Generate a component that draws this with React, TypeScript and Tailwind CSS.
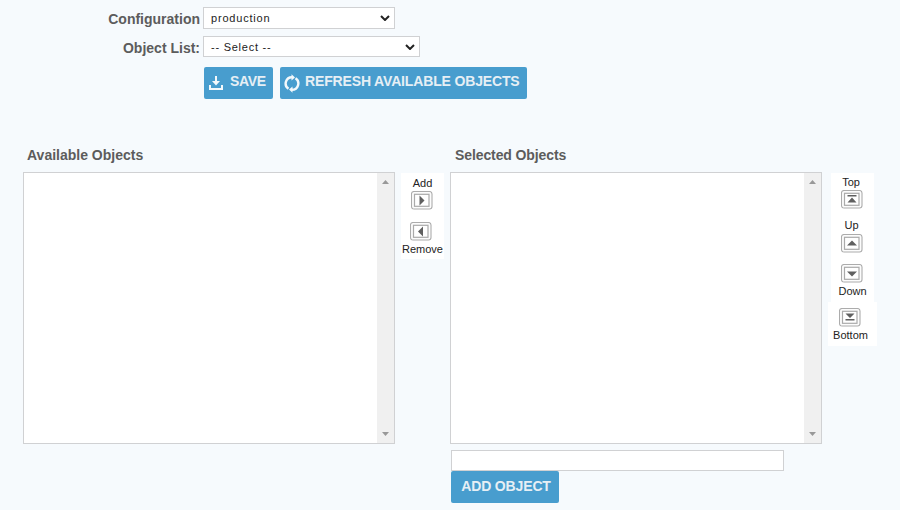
import type { ReactNode } from "react";

type Direction = "right" | "left" | "top" | "up" | "down" | "bottom";

const arrows: Record<Direction, ReactNode> = {
  right: <path d="M8.500 4.500v10l5-5z" />,
  left: <path d="M13 4.500v10l-5-5z" />,
  top: <path d="M6.500 5h9v1.500h-9zM11 7.500l4.500 5h-9z" />,
  up: <path d="M11 6.500l5 5H6z" />,
  down: <path d="M6 7.500h10l-5 5z" />,
  bottom: <path d="M6.500 5.500h9L11 10zM6.500 11h9v1.500h-9z" />,
};

function ArrowButton({ dir }: { dir: Direction }) {
  return (
    <svg className="block h-[19px] w-[22px] shrink-0" viewBox="0 0 22 19">
      <rect x="0.500" y="0.500" width="20.500" height="17.500" rx="2.500" fill="#fcfcfc" stroke="#acacac" strokeWidth="1.100" />
      <rect x="3.500" y="3.300" width="14.500" height="12" fill="#fff" stroke="#aaa" strokeWidth="1.200" />
      <g fill="#606060">{arrows[dir]}</g>
    </svg>
  );
}

function Select({ value, className }: { value: string; className: string }) {
  return (
    <div className={`flex items-center justify-between border border-[#d0d1d3] bg-white pl-[7px] pr-1 text-[11px] text-[#222] ${className}`}>
      <span className="pt-[2px]">{value}</span>
      <svg className="h-[6px] w-[10px]" viewBox="0 0 10 6" fill="none" stroke="#222" strokeWidth="2">
        <path d="M1 1l4 4 4-4" />
      </svg>
    </div>
  );
}

function ListBox() {
  return (
    <div className="flex h-[272px] w-[372px] shrink-0 justify-end border border-[#d0d1d3] bg-white">
      <div className="flex w-[17px] flex-col items-center justify-between bg-[#f0f0f0] pb-[7px] pt-[7px]">
        <svg className="h-[4px] w-[7px]" viewBox="0 0 7 4" fill="#989898"><path d="M0 4l3.500-4L7 4z" /></svg>
        <svg className="h-[4px] w-[7px]" viewBox="0 0 7 4" fill="#989898"><path d="M0 0l3.500 4L7 0z" /></svg>
      </div>
    </div>
  );
}

const button = "flex h-8 items-start rounded-[2px] bg-[#489dce] text-sm leading-4 font-bold text-[#e6eff5] whitespace-nowrap";
const label = "block text-[11px] leading-3 text-[#222] whitespace-nowrap";

export default function App() {
  return (
    <main className="h-[510px] w-[900px] overflow-hidden bg-[#f6fafd] font-['Liberation_Sans',Arial,sans-serif]">
      <div className="flex h-[67px] flex-col pt-[7px] text-sm font-bold text-[#5c5c5c]">
        <div className="flex h-[29px] items-start">
          <label className="w-[203px] pr-[3px] pt-[2px] text-right">Configuration</label>
          <Select value="production" className="h-[22px] w-[192px] font-normal tracking-[0.800px]" />
        </div>
        <div className="flex items-start">
          <label className="w-[203px] pr-[3px] pt-[2px] text-right">Object List:</label>
          <Select value="-- Select --" className="h-[21px] w-[217px] font-normal tracking-[0.750px]" />
        </div>
      </div>
      <div className="flex gap-[7px] pl-[204px]">
        <button className={`${button} w-[69px] pl-[5px] pt-[6px] tracking-[-0.300px]`}>
          <svg className="mr-[7px] mt-[3px] h-[14px] w-[14px]" viewBox="0 0 14 14" fill="none" stroke="#f3f8fb" strokeWidth="2">
            <path d="M1 9v4h12V9M7 0v6" />
            <path d="M3 5h8L7 9.500z" fill="#f3f8fb" stroke="none" />
          </svg>
          SAVE
        </button>
        <button className={`${button} w-[247px] pl-1 pt-[6px] tracking-[-0.150px]`}>
          <svg className="mr-[5px] h-[20px] w-[16px]" viewBox="0 0 16 20" fill="none" stroke="#f3f8fb" strokeWidth="2.400">
            <path d="M4.500 15.740A6.300 6.300 0 0 1 8 4.200M11.500 5.260A6.300 6.300 0 0 1 8 16.800" />
            <path d="M7.500 1.200L11 4.400 7.500 7.600zM8.500 13.400L5 16.600 8.500 19.800z" fill="#f3f8fb" stroke="none" />
          </svg>
          REFRESH AVAILABLE OBJECTS
        </button>
      </div>
      <div className="flex h-[73px] items-end pb-[7px] text-sm font-bold text-[#5c5c5c]">
        <h2 className="w-[428px] pl-[27px]">Available Objects</h2>
        <h2 className="pl-[27px] tracking-[-0.100px]">Selected Objects</h2>
      </div>
      <div className="flex items-start pl-[23px]">
        <ListBox />
        <div className="ml-[6px] mr-[6px] mt-[1px] flex h-[86px] w-[43px] shrink-0 flex-col items-center bg-white pt-[4px]">
          <span className={label}>Add</span>
          <div className="mt-[2px] pr-[2px]"><ArrowButton dir="right" /></div>
          <div className="mt-[12px] pr-[4px]"><ArrowButton dir="left" /></div>
          <span className={`${label} mt-[2px]`}>Remove</span>
        </div>
        <ListBox />
        <div className="ml-[6px] mt-[1px] flex w-[49px] shrink-0 flex-col">
          <div className="ml-[3px] flex h-[129px] w-[43px] flex-col items-center bg-white pt-[3px]">
            <span className={`${label} pr-[3px]`}>Top</span>
            <div className="mt-[2px] pr-[2px]"><ArrowButton dir="top" /></div>
            <span className={`${label} mt-[10px] pr-[2px]`}>Up</span>
            <div className="mt-[3px] pr-[2px]"><ArrowButton dir="up" /></div>
            <div className="mt-[11px] pr-[2px]"><ArrowButton dir="down" /></div>
            <span className={`${label} mt-[2px]`}>Down</span>
          </div>
          <div className="flex h-[44px] flex-col items-center bg-white pt-[6px]">
            <div className="pr-[6px]"><ArrowButton dir="bottom" /></div>
            <span className={`${label} mt-[2px] pr-[4px]`}>Bottom</span>
          </div>
        </div>
      </div>
      <div className="pl-[451px] pt-[6px]">
        <input aria-label="Object name" className="block h-[21px] w-[333px] border border-[#d0d1d3] bg-white px-2 text-[11px]" />
        <button className={`${button} w-[108px] justify-center pt-[7px] pl-[2px] tracking-[-0.150px]`}>ADD OBJECT</button>
      </div>
    </main>
  );
}
